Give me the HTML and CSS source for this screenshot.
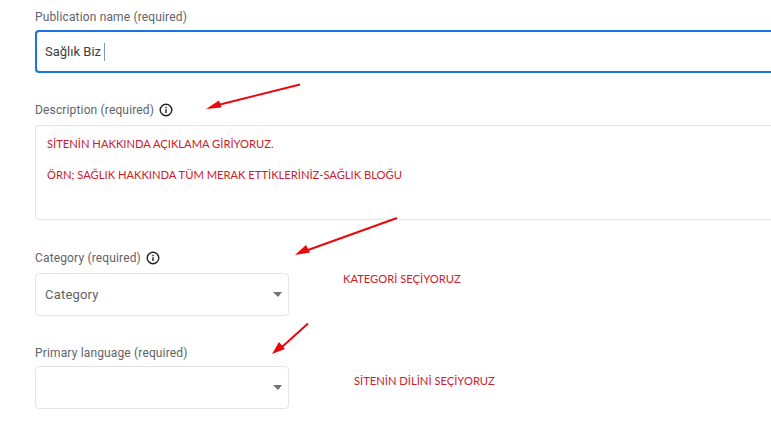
FILE: index.html
```html
<!DOCTYPE html>
<html lang="en">
<head>
<meta charset="utf-8">
<title>Publication</title>
<link rel="stylesheet" href="styles.css">
</head>
<body>
<main class="form">
  <section class="field field-name">
    <div class="label">Publication name (required)</div>
    <div class="box box-input box-active"><span class="value">Sağlık Biz</span><span class="caret"></span></div>
  </section>
  <section class="field field-desc">
    <div class="label">Description (required)
      <svg class="info" viewBox="0 0 14 14"><circle cx="7" cy="7" r="5.8"/><path d="M7 6.300v3.800M7 3.800v1.500"/></svg>
    </div>
    <div class="box box-area">
      <p class="note">SİTENİN HAKKINDA AÇIKLAMA GİRİYORUZ.</p>
      <p class="note">ÖRN; SAĞLIK HAKKINDA TÜM MERAK ETTİKLERİNİZ-SAĞLIK BLOĞU</p>
    </div>
  </section>
  <section class="field field-cat">
    <div class="label">Category (required)
      <svg class="info" viewBox="0 0 14 14"><circle cx="7" cy="7" r="5.8"/><path d="M7 6.300v3.800M7 3.800v1.500"/></svg>
    </div>
    <div class="box box-select"><span class="placeholder">Category</span><span class="arrow-down"></span></div>
  </section>
  <section class="field field-lang">
    <div class="label">Primary language (required)</div>
    <div class="box box-select box-lang"><span class="placeholder"></span><span class="arrow-down"></span></div>
  </section>
</main>
<p class="note note-float note-cat">KATEGORİ SEÇİYORUZ</p>
<p class="note note-float note-lang">SİTENİN DİLİNİ SEÇİYORUZ</p>
<svg class="arrows" width="771" height="426" viewBox="0 0 771 426">
  <g class="arrow-lines">
    <path d="M300 84.500L218 105"/>
    <path d="M397 218L308 250"/>
    <path d="M308 323.500L282 347"/>
  </g>
  <g class="arrow-heads">
    <path d="M206 109L219 100.500L221.500 107.500Z"/>
    <path d="M295 255L306 245L310 252.500Z"/>
    <path d="M272 354L279 342L285 349Z"/>
  </g>
</svg>
</body>
</html>
```
FILE: styles.css
```css
* { box-sizing: border-box; }
html, body { margin: 0; height: 100%; }
body {
  position: relative;
  width: 771px;
  height: 426px;
  overflow: hidden;
  background: #fff;
  font-family: Roboto, "Liberation Sans", sans-serif;
}
.form {
  display: flex;
  flex-direction: column;
  padding: 10px 0 0 35px;
  width: 771px;
}
.field { display: flex; flex-direction: column; }
.field-desc { margin-top: 30px; }
.field-cat { margin-top: 31px; }
.field-lang { margin-top: 30px; }
.label {
  display: flex;
  align-items: center;
  gap: 5px;
  height: 15px;
  font-size: 12px;
  line-height: 15px;
  letter-spacing: 0.15px;
  color: #5f6368;
}
.info { width: 14px; height: 14px; margin-top: -1px; fill: none; stroke: #202124; stroke-width: 1.4; }
.box { border: 1px solid #e3e5e7; border-radius: 4px; background: #fff; }
.box-input {
  display: flex;
  align-items: center;
  height: 43px;
  margin-top: 5px;
  border-right: 0;
  border-radius: 4px 0 0 4px;
}
.box-active { border: 2px solid #1a73e8; border-right: 0; padding-left: 8px; }
.value { font-size: 13px; color: #3c4043; }
.caret { width: 1px; height: 18px; margin-left: 3px; background: #7f9ab5; }
.box-area {
  height: 95px;
  margin-top: 7px;
  padding: 10px 11px;
  border-right: 0;
  border-radius: 4px 0 0 4px;
}
.note {
  margin: 0 0 16px;
  font-family: Lato, "Open Sans", sans-serif;
  font-size: 11.2px;
  line-height: 15px;
  color: #c8202c;
}
.box-select {
  display: flex;
  align-items: center;
  justify-content: space-between;
  width: 254px;
  height: 43px;
  margin-top: 7px;
  padding: 0 6px 0 9px;
}
.box-lang { margin-top: 5px; }
.placeholder { font-size: 13px; letter-spacing: 0.2px; color: #5f6368; }
.arrow-down {
  width: 0;
  height: 0;
  border-left: 5px solid transparent;
  border-right: 4px solid transparent;
  border-top: 5px solid #6f7276;
}
.note-float { position: absolute; margin: 0; white-space: nowrap; }
.note-cat { left: 343px; top: 271px; }
.note-lang { left: 354px; top: 373px; }
.arrows { position: absolute; left: 0; top: 0; pointer-events: none; }
.arrow-lines path { fill: none; stroke: #e8080c; stroke-width: 2; }
.arrow-heads path { fill: #e8080c; }
```
